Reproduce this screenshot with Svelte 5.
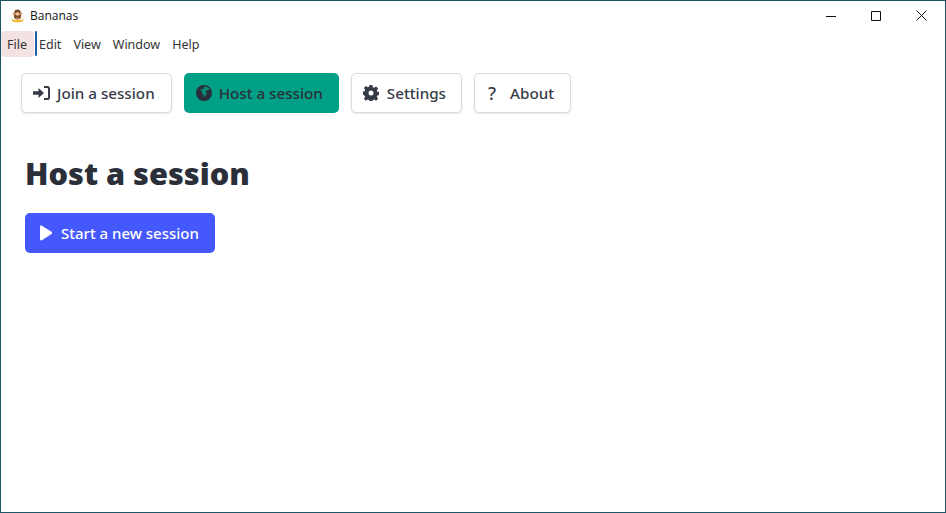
<script lang="ts">
  const menus = ['Edit', 'View', 'Window', 'Help'];
</script>

<div class="window">
  <header class="titlebar">
    <svg class="app-icon" width="15" height="14" viewBox="0 0 15 14">
      <path d="M1 9.500c2.500 2 10.500 2 13 0l-1.500 3c-2 1-8 1-10 0z" fill="#efbb2a" />
      <circle cx="7.500" cy="7" r="3.600" fill="#7a4a26" />
      <circle cx="7.500" cy="3.800" r="3.200" fill="#7a4a26" />
      <circle cx="3.800" cy="4.600" r="1.200" fill="#d79a6a" />
      <circle cx="11.200" cy="4.600" r="1.200" fill="#d79a6a" />
      <ellipse cx="7.500" cy="5" rx="2.300" ry="1.800" fill="#eec09a" />
      <path d="M5.500 8.500h4v1.500h-4z" fill="#c27a48" />
    </svg>
    <span class="app-name">Bananas</span>
    <div class="controls">
      <svg width="10" height="10" viewBox="0 0 10 10"><path d="M0 5.500h10" stroke="#111" /></svg>
      <svg width="10" height="10" viewBox="0 0 10 10"><path d="M.5.500h9v9h-9z" fill="none" stroke="#111" /></svg>
      <svg width="11" height="11" viewBox="0 0 11 11"><path d="M.5.500l10 10M10.500.500l-10 10" stroke="#111" /></svg>
    </div>
  </header>

  <nav class="menubar">
    <span class="menu active">File</span>
    <span class="focus-bar"></span>
    {#each menus as m}
      <span class="menu">{m}</span>
    {/each}
  </nav>

  <div class="tabs">
    <button class="btn">
      <svg width="17" height="16" viewBox="0 0 17 16">
        <path d="M0 6.200h5.500V3l5.500 5-5.500 5V9.800H0z" fill="#363b47" />
        <path d="M11 2h3.200A1.800 1.800 0 0 1 16 3.800v8.400a1.800 1.800 0 0 1-1.800 1.800H11" fill="none" stroke="#363b47" stroke-width="2" />
      </svg>
      Join a session
    </button>
    <button class="btn selected">
      <svg width="16" height="16" viewBox="0 0 16 16">
        <circle cx="8" cy="8" r="8" fill="#2a2f3a" />
        <path d="M8.500 1.600c2 0 4 1 5 2.600l-1.600 1.400-1.600-.5-.7 1.600 1.300 1.500-1.400 2-1 2-.9-2.600-1.700-1.200.5-1.600-1.700-1 .7-1.500 2-.2z" fill="#00a086" opacity=".85" />
      </svg>
      Host a session
    </button>
    <button class="btn settings">
      <svg width="16" height="16" viewBox="0 0 16 16">
        <path d="M6.600 0h2.800l.4 2.200 1.400.6 1.900-1.300 2 2-1.300 1.900.6 1.400 2.100.4v2.800l-2.100.4-.6 1.400 1.300 1.900-2 2-1.900-1.300-1.400.6-.4 2.100H6.600l-.4-2.100-1.400-.6-1.900 1.300-2-2 1.300-1.900-.6-1.400L-.5 9.400V6.600l2.100-.4.6-1.400-1.300-1.900 2-2 1.900 1.300 1.400-.6z" fill="#363b47" />
        <circle cx="8" cy="8" r="2.500" fill="#fff" />
      </svg>
      Settings
    </button>
    <button class="btn about">
      <span class="q">?</span>
      About
    </button>
  </div>

  <main class="content">
    <h1>Host a session</h1>
    <button class="btn primary">
      <svg width="14" height="16" viewBox="0 0 14 16">
        <path d="M1 1.800C1 .8 2 .3 2.900.8l9.600 6c.8.500.8 1.800 0 2.300l-9.600 6.100c-.9.500-1.900 0-1.900-1z" fill="#fff" />
      </svg>
      Start a new session
    </button>
  </main>
</div>

<style>
  :global(body) {
    margin: 0;
    background: #fff;
  }

  .window {
    box-sizing: border-box;
    width: 946px;
    height: 513px;
    border: 1px solid #1d5568;
    overflow: hidden;
    font-family: "Open Sans", "Noto Sans", sans-serif;
    color: #363b47;
  }

  .titlebar {
    display: flex;
    align-items: center;
    height: 29px;
    padding-left: 9px;
    font-size: 12px;
    color: #111;
  }

  .app-icon { margin-right: 5px; }

  .controls {
    display: flex;
    align-items: center;
    gap: 35px;
    margin-left: auto;
    padding-right: 18px;
  }

  .menubar {
    display: flex;
    align-items: stretch;
    height: 27px;
    font-family: "Noto Sans", sans-serif;
    font-size: 12.5px;
    color: #333;
    padding-top: 1px;
    box-sizing: border-box;
  }

  .menu {
    display: flex;
    align-items: center;
    padding: 0 6px;
    margin-right: 0;
  }

  .menu.active {
    background: #f2e2e2;
    border-radius: 3px;
    width: 21px;
    margin-right: 1px;
  }

  .focus-bar {
    width: 2px;
    height: 25px;
    margin-right: -4px;
    background: #1c5fa8;
    border-radius: 2px;
  }

  .tabs {
    display: flex;
    gap: 12px;
    padding: 16px 0 0 20px;
  }

  .btn {
    display: flex;
    align-items: center;
    gap: 7px;
    height: 40px;
    box-sizing: border-box;
    padding: 0 16px 0 11px;
    background: #fff;
    border: 1px solid #dbdbdb;
    border-radius: 5px;
    box-shadow: 0 1px 2px rgba(10, 10, 10, 0.1);
    font: 500 15.2px "Noto Sans", "Open Sans", sans-serif;
    color: #363b47;
  }

  .btn.selected {
    background: #00a086;
    border-color: transparent;
    box-shadow: none;
    color: #2a2f3a;
    padding-right: 15px;
  }

  .btn.settings { gap: 8px; padding-right: 15px; }

  .btn.about { padding-left: 13px; gap: 14px; }

  .q { font-size: 18px; }

  .btn.primary {
    background: #4558fe;
    border-color: transparent;
    box-shadow: none;
    color: #fff;
    padding: 0 15px 0 13px;
    gap: 8px;
    font-size: 15px;
  }

  .content { padding: 37px 0 0 24px; }

  h1 {
    margin: 0 0 17px;
    font: 900 30.7px/46px "Noto Sans", "Open Sans", sans-serif;
    color: #2a2f3a;
  }
</style>
